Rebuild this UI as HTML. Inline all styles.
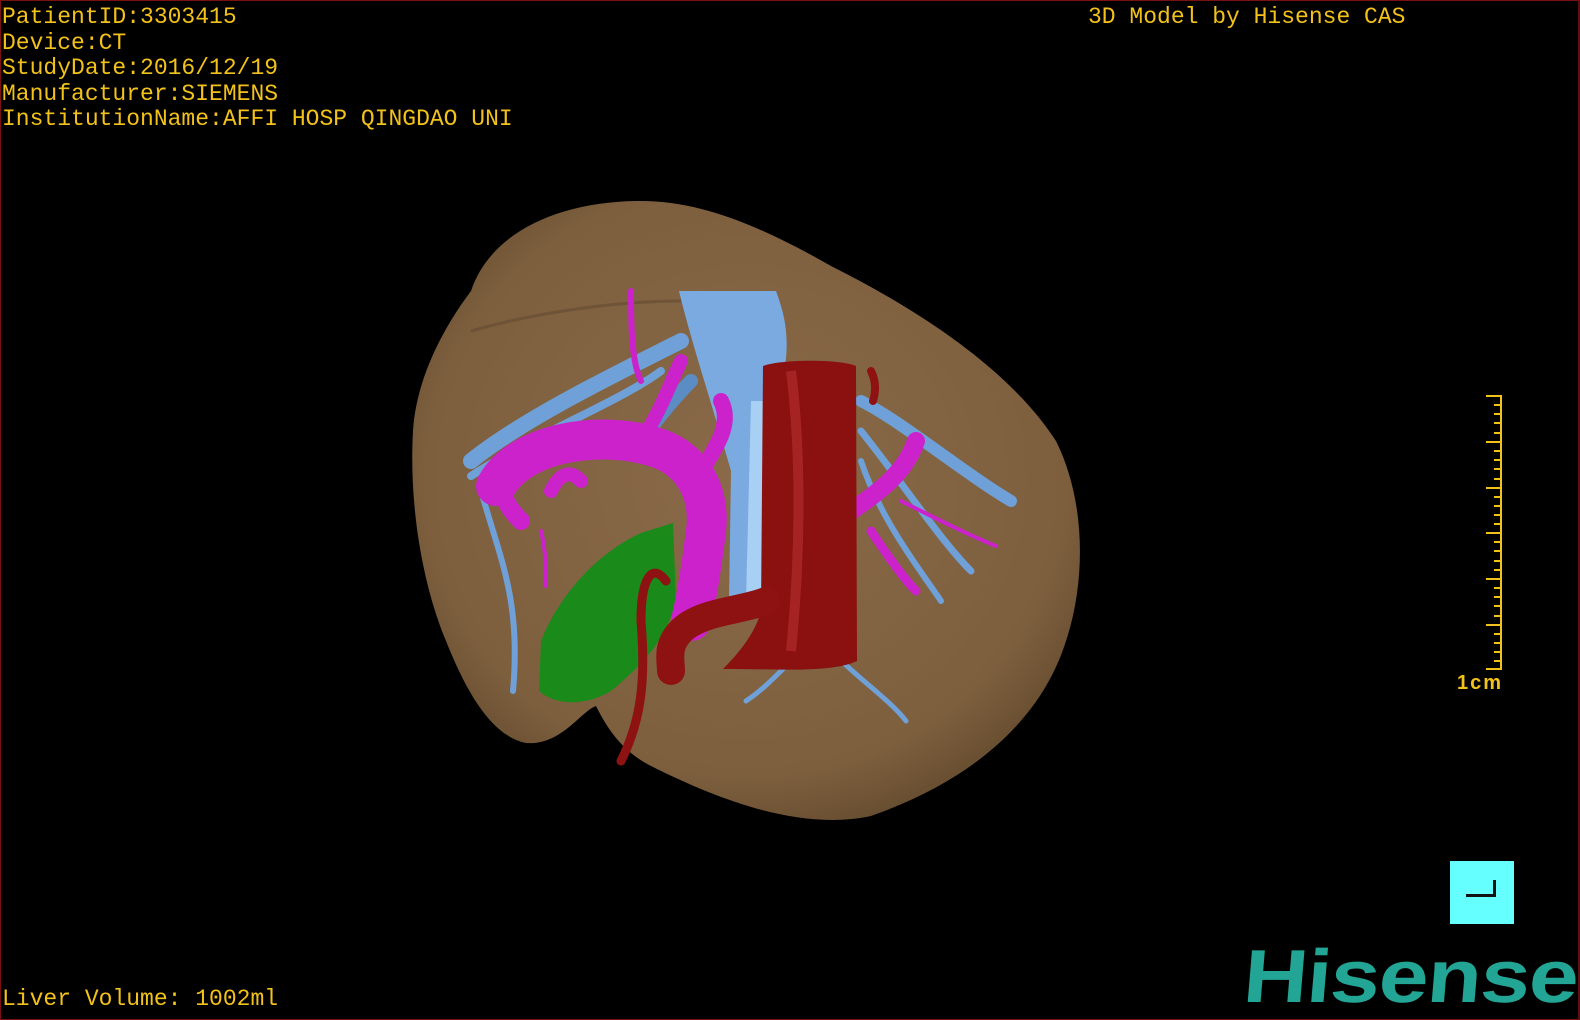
<!DOCTYPE html>
<html><head><meta charset="utf-8"><style>
html,body{margin:0;padding:0;background:#000;}
#c{position:relative;width:1580px;height:1020px;overflow:hidden;background:#000;box-sizing:border-box;border:1px solid #7a1010;border-right:2px solid #5a1010;}
.t{position:absolute;font-family:"Liberation Mono",monospace;font-size:23px;color:#f2c21a;line-height:25.5px;white-space:pre;}
#logo{position:absolute;left:1246px;top:938px;font-family:"Liberation Sans",sans-serif;font-weight:bold;font-size:75px;line-height:1;color:#22a595;letter-spacing:-1px;transform-origin:left top;transform:scaleX(1.19) skewX(-4deg);}
</style></head><body><div id="c">
<svg width="1580" height="1020" style="position:absolute;left:0;top:0">
<defs>
<radialGradient id="lg" cx="0.5" cy="0.45" r="0.6"><stop offset="0" stop-color="#8a6a48"/><stop offset="0.8" stop-color="#7d5f3e"/><stop offset="1" stop-color="#634a2d"/></radialGradient>
</defs>
<path d="M470,290 C490,230 560,200 640,200 C700,200 760,225 830,265 C920,310 1010,370 1055,440 C1085,500 1085,580 1065,640 C1040,720 970,780 870,815 C800,830 720,800 650,765 C620,750 605,725 595,705 C580,710 560,745 525,742 C490,735 465,690 445,640 C420,580 408,500 412,430 C415,380 440,330 470,290 Z" fill="url(#lg)"/>
<path d="M470,330 C540,310 620,300 680,300" stroke="#5e4630" stroke-width="3" fill="none" opacity="0.5"/>
<path d="M540,640 C560,590 600,550 640,532 L672,522 L675,600 C665,640 640,665 610,690 C585,705 555,705 538,690 Z" fill="#1a8a1a"/>
<g fill="none" stroke-linecap="round" stroke="#6fa0d8">
<path d="M470,460 C520,420 600,380 680,340" stroke-width="16"/>
<path d="M470,475 C540,430 620,400 660,370" stroke-width="8"/>
<path d="M480,490 C500,560 520,600 512,690" stroke-width="6"/>
<path d="M860,400 C900,420 960,470 1010,500" stroke-width="12"/>
<path d="M860,430 C900,480 940,540 970,570" stroke-width="7"/>
<path d="M860,460 C880,520 920,570 940,600" stroke-width="6"/>
<path d="M830,650 C860,680 890,700 905,720" stroke-width="5"/>
<path d="M790,660 C770,680 760,690 745,700" stroke-width="5"/>
<path d="M690,380 C670,400 655,420 640,440" stroke-width="14" stroke="#5c8cc4"/>
</g>
<path d="M678,290 L775,290 C790,330 790,360 770,420 L772,600 L728,600 L730,470 C710,400 690,340 678,290 Z" fill="#7aaae0"/>
<path d="M750,400 L770,400 L772,600 L745,600 Z" fill="#a8d0f4"/>
<g fill="none" stroke-linecap="round" stroke="#cc22cc">
<path d="M495,485 C520,440 600,430 650,445 C690,455 710,490 705,530 C700,570 695,600 690,620" stroke-width="40"/>
<path d="M520,520 C500,500 495,480 510,470" stroke-width="18"/>
<path d="M550,490 C560,470 570,470 580,480" stroke-width="14"/>
<path d="M640,440 C660,410 670,380 680,360" stroke-width="14"/>
<path d="M700,470 C720,440 730,420 720,400" stroke-width="16"/>
<path d="M850,510 C880,490 905,470 915,440" stroke-width="18"/>
<path d="M870,530 C890,560 905,580 915,590" stroke-width="9"/>
<path d="M630,290 C630,320 630,360 640,380" stroke-width="6"/>
<path d="M540,530 C545,550 545,570 545,585" stroke-width="4"/>
<path d="M900,500 C940,520 970,535 995,545" stroke-width="4"/>
</g>
<path d="M762,365 C780,358 840,358 855,365 L856,660 C830,672 780,668 722,668 C740,650 755,630 760,610 Z" fill="#8b1010"/>
<path d="M790,370 C800,450 800,550 790,650" stroke="#b83030" stroke-width="10" fill="none" opacity="0.6"/>
<g fill="none" stroke-linecap="round" stroke="#8e1212">
<path d="M765,600 C740,610 700,610 680,630 C665,645 670,660 670,670" stroke-width="28"/>
<path d="M665,580 C650,560 640,580 640,620 C645,680 640,720 620,760" stroke-width="9"/>
<path d="M870,370 C875,380 875,390 872,400" stroke-width="8"/>
</g>
</svg>
<div class="t" style="left:1px;top:4px">PatientID:3303415
Device:CT
StudyDate:2016/12/19
Manufacturer:SIEMENS
InstitutionName:AFFI HOSP QINGDAO UNI</div>
<div class="t" style="left:1087px;top:4px">3D Model by Hisense CAS</div>
<div class="t" style="left:1px;top:986px">Liver Volume: 1002ml</div>
<svg width="40" height="300" style="position:absolute;left:1480px;top:390px">
<g stroke="#f2c21a" stroke-width="2">
<line x1="20" y1="5" x2="20" y2="278"/>
<line x1="5" y1="5" x2="21" y2="5"/><line x1="5" y1="278" x2="21" y2="278"/>
<line x1="5" y1="51" x2="20" y2="51"/><line x1="5" y1="97" x2="20" y2="97"/><line x1="5" y1="142" x2="20" y2="142"/><line x1="5" y1="188" x2="20" y2="188"/><line x1="5" y1="234" x2="20" y2="234"/>
<line x1="13" y1="14" x2="20" y2="14"/><line x1="13" y1="23" x2="20" y2="23"/><line x1="13" y1="32" x2="20" y2="32"/><line x1="13" y1="42" x2="20" y2="42"/>
<line x1="13" y1="60" x2="20" y2="60"/><line x1="13" y1="69" x2="20" y2="69"/><line x1="13" y1="78" x2="20" y2="78"/><line x1="13" y1="88" x2="20" y2="88"/>
<line x1="13" y1="106" x2="20" y2="106"/><line x1="13" y1="115" x2="20" y2="115"/><line x1="13" y1="124" x2="20" y2="124"/><line x1="13" y1="133" x2="20" y2="133"/>
<line x1="13" y1="151" x2="20" y2="151"/><line x1="13" y1="160" x2="20" y2="160"/><line x1="13" y1="170" x2="20" y2="170"/><line x1="13" y1="179" x2="20" y2="179"/>
<line x1="13" y1="197" x2="20" y2="197"/><line x1="13" y1="206" x2="20" y2="206"/><line x1="13" y1="215" x2="20" y2="215"/><line x1="13" y1="225" x2="20" y2="225"/>
<line x1="13" y1="243" x2="20" y2="243"/><line x1="13" y1="252" x2="20" y2="252"/><line x1="13" y1="261" x2="20" y2="261"/><line x1="13" y1="270" x2="20" y2="270"/>
</g></svg>
<div style="position:absolute;left:1456px;top:671px;font-family:'Liberation Sans',sans-serif;font-weight:bold;font-size:20px;letter-spacing:2px;color:#f2c21a;">1cm</div>
<div style="position:absolute;left:1449px;top:860px;width:64px;height:63px;background:#66ffff;">
<div style="position:absolute;left:16px;top:19px;width:30px;height:17px;border-right:3px solid #111;border-bottom:3px solid #111;box-sizing:border-box;"></div></div>
<div id="logo">Hisense</div>
</div></body></html>
